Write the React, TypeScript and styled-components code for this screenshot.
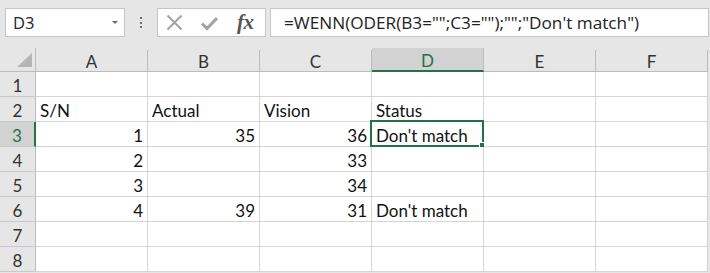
import React from "react";
import styled, { createGlobalStyle } from "styled-components";

const Global = createGlobalStyle`
  html, body { margin: 0; padding: 0; background: #e6e6e6; }
  body { width: 710px; height: 273px; overflow: hidden; font-family: Lato, "Open Sans", sans-serif; }
`;

const Page = styled.div`
  width: 710px;
  height: 273px;
  background: #e6e6e6;
  display: flex;
  flex-direction: column;
`;

const Toolbar = styled.div`
  height: 48px;
  box-sizing: border-box;
  padding: 8px 0 0 5px;
  display: flex;
  align-items: flex-start;
  flex-shrink: 0;
`;

const Box = styled.div`
  height: 29px;
  flex-shrink: 0;
  box-sizing: border-box;
  background: #fff;
  border: 1px solid #c6c6c6;
  display: flex;
  align-items: center;
`;

const NameBox = styled(Box)`
  width: 120px;
  padding: 0 6px 0 7px;
  justify-content: space-between;
  font-family: "Open Sans", sans-serif;
  font-size: 16.5px;
  color: #222;
`;

const Caret = styled.span`
  width: 0;
  height: 0;
  border-left: 3.5px solid transparent;
  border-right: 3.5px solid transparent;
  border-top: 3.5px solid #6d6d6d;
  margin-right: 0px;
`;

const Dots = styled.div`
  width: 32px;
  height: 29px;
  flex-shrink: 0;
  display: flex;
  flex-direction: column;
  align-items: center;
  justify-content: center;
  gap: 2.5px;
  span {
    width: 2px;
    height: 2px;
    background: #6d6d6d;
  }
`;

const FxBox = styled(Box)`
  width: 109px;
  padding: 0 0 0 8px;
  gap: 18px;
  margin-right: 4px;
`;

const FxText = styled.span`
  font-family: "Liberation Serif", serif;
  font-style: italic;
  font-weight: bold;
  font-size: 21px;
  color: #555;
  letter-spacing: -0.5px;
  margin-left: 1px;
`;

const Formula = styled(Box)`
  width: 439px;
  padding-left: 13px;
  font-family: "Open Sans", sans-serif;
  font-size: 17.2px;
  color: #222;
  white-space: nowrap;
`;

const Grid = styled.div`
  display: grid;
  grid-template-columns: 36px repeat(6, 112px);
  grid-template-rows: 24px repeat(8, 25px);
  width: 708px;
`;

const Corner = styled.div`
  position: relative;
  box-sizing: border-box;
  border-right: 1px solid #bcbcbc;
  border-bottom: 1px solid #bcbcbc;
  &::after {
    content: "";
    position: absolute;
    right: 3px;
    bottom: 4px;
    width: 0;
    height: 0;
    border-left: 15px solid transparent;
    border-bottom: 14px solid #b5b5b5;
  }
`;

const ColHead = styled.div<{ $sel?: boolean }>`
  box-sizing: border-box;
  display: flex;
  align-items: center;
  justify-content: center;
  font-size: 17px;
  padding-top: 2px;
  color: ${(p) => (p.$sel ? "#217346" : "#333")};
  background: ${(p) => (p.$sel ? "#d2d2d2" : "#e6e6e6")};
  border-right: 1px solid #bcbcbc;
  border-bottom: ${(p) => (p.$sel ? "2px solid #217346" : "1px solid #bcbcbc")};
  margin-top: ${(p) => (p.$sel ? "0" : "2px")};
`;

const RowHead = styled.div<{ $sel?: boolean }>`
  box-sizing: border-box;
  display: flex;
  align-items: center;
  justify-content: center;
  font-size: 17px;
  padding-top: 2px;
  color: ${(p) => (p.$sel ? "#217346" : "#333")};
  background: ${(p) => (p.$sel ? "#d2d2d2" : "#e6e6e6")};
  border-bottom: 1px solid #c8c8c8;
  border-right: ${(p) => (p.$sel ? "2px solid #217346" : "1px solid #bcbcbc")};
`;

const Cell = styled.div<{ $num?: boolean }>`
  box-sizing: border-box;
  background: #fff;
  border-right: 1px solid #d4d4d4;
  border-bottom: 1px solid #d4d4d4;
  display: flex;
  align-items: flex-end;
  justify-content: ${(p) => (p.$num ? "flex-end" : "flex-start")};
  padding: 0 4px 0 4px;
  font-size: 17px;
  line-height: 21px;
  color: #111;
  white-space: nowrap;
  position: relative;
`;

const Selection = styled.div`
  position: absolute;
  left: -2px;
  top: -2px;
  right: -1px;
  bottom: -1px;
  border: 2px solid #217346;
  pointer-events: none;
  &::after {
    content: "";
    position: absolute;
    right: -4px;
    bottom: -4px;
    width: 5px;
    height: 5px;
    background: #217346;
    border: 1px solid #fff;
  }
`;

const cols = ["A", "B", "C", "D", "E", "F"];
const data: (string | number | null)[][] = [
  [null, null, null, null, null, null],
  ["S/N", "Actual", "Vision", "Status", null, null],
  [1, 35, 36, "Don't match", null, null],
  [2, null, 33, null, null, null],
  [3, null, 34, null, null, null],
  [4, 39, 31, "Don't match", null, null],
  [null, null, null, null, null, null],
  [null, null, null, null, null, null],
];

export default function App() {
  return (
    <Page>
      <Global />
      <Toolbar>
        <NameBox>
          <span>D3</span>
          <Caret />
        </NameBox>
        <Dots>
          <span />
          <span />
          <span />
        </Dots>
        <FxBox>
          <svg width="17" height="17" viewBox="0 0 17 17">
            <path d="M1.5 1.5 L15.5 15.5 M15.5 1.5 L1.5 15.5" stroke="#a3a3a3" strokeWidth="2" fill="none" />
          </svg>
          <svg width="17" height="16" viewBox="0 0 17 16">
            <path d="M1 8.5 L6 13.5 L16 3" stroke="#a3a3a3" strokeWidth="3" fill="none" />
          </svg>
          <FxText>fx</FxText>
        </FxBox>
        <Formula>=WENN(ODER(B3="";C3="");"";"Don't match")</Formula>
      </Toolbar>
      <Grid>
        <Corner />
        {cols.map((c) => (
          <ColHead key={c} $sel={c === "D"}>
            {c}
          </ColHead>
        ))}
        {data.map((row, r) => (
          <React.Fragment key={r}>
            <RowHead $sel={r === 2}>{r + 1}</RowHead>
            {row.map((v, c) => (
              <Cell key={c} $num={typeof v === "number"}>
                {v}
                {r === 2 && c === 3 && <Selection />}
              </Cell>
            ))}
          </React.Fragment>
        ))}
      </Grid>
    </Page>
  );
}
